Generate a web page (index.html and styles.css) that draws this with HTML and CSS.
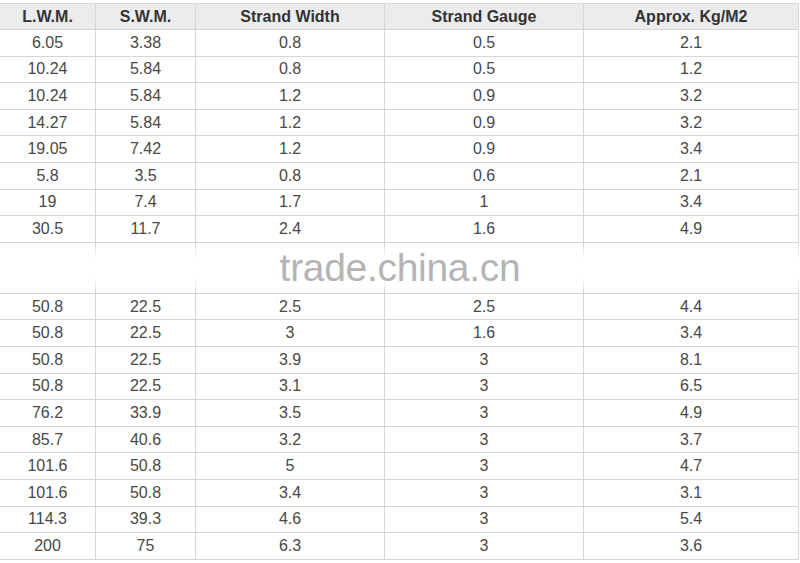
FILE: index.html
```html
<!DOCTYPE html>
<html>
<head>
<meta charset="utf-8">
<link rel="stylesheet" href="styles.css">
</head>
<body>
<div class="wrap">
<table class="spec">
  <colgroup>
    <col class="c1"><col class="c2"><col class="c3"><col class="c4"><col class="c5">
  </colgroup>
  <thead>
    <tr><th>L.W.M.</th><th>S.W.M.</th><th>Strand Width</th><th>Strand Gauge</th><th>Approx. Kg/M2</th></tr>
  </thead>
  <tbody>
    <tr><td>6.05</td><td>3.38</td><td>0.8</td><td>0.5</td><td>2.1</td></tr>
    <tr><td>10.24</td><td>5.84</td><td>0.8</td><td>0.5</td><td>1.2</td></tr>
    <tr><td>10.24</td><td>5.84</td><td>1.2</td><td>0.9</td><td>3.2</td></tr>
    <tr><td>14.27</td><td>5.84</td><td>1.2</td><td>0.9</td><td>3.2</td></tr>
    <tr><td>19.05</td><td>7.42</td><td>1.2</td><td>0.9</td><td>3.4</td></tr>
    <tr><td>5.8</td><td>3.5</td><td>0.8</td><td>0.6</td><td>2.1</td></tr>
    <tr><td>19</td><td>7.4</td><td>1.7</td><td>1</td><td>3.4</td></tr>
    <tr><td>30.5</td><td>11.7</td><td>2.4</td><td>1.6</td><td>4.9</td></tr>
    <tr class="blank"><td></td><td></td><td></td><td></td><td></td></tr>
    <tr><td>50.8</td><td>22.5</td><td>2.5</td><td>2.5</td><td>4.4</td></tr>
    <tr><td>50.8</td><td>22.5</td><td>3</td><td>1.6</td><td>3.4</td></tr>
    <tr><td>50.8</td><td>22.5</td><td>3.9</td><td>3</td><td>8.1</td></tr>
    <tr><td>50.8</td><td>22.5</td><td>3.1</td><td>3</td><td>6.5</td></tr>
    <tr><td>76.2</td><td>33.9</td><td>3.5</td><td>3</td><td>4.9</td></tr>
    <tr><td>85.7</td><td>40.6</td><td>3.2</td><td>3</td><td>3.7</td></tr>
    <tr><td>101.6</td><td>50.8</td><td>5</td><td>3</td><td>4.7</td></tr>
    <tr><td>101.6</td><td>50.8</td><td>3.4</td><td>3</td><td>3.1</td></tr>
    <tr><td>114.3</td><td>39.3</td><td>4.6</td><td>3</td><td>5.4</td></tr>
    <tr><td>200</td><td>75</td><td>6.3</td><td>3</td><td>3.6</td></tr>
  </tbody>
</table>
<div class="watermark"><span>trade.china.cn</span></div>
</div>
</body>
</html>
```
FILE: styles.css
```css
html, body {
  margin: 0;
  padding: 0;
  background: #fff;
}
.wrap {
  position: relative;
  width: 800px;
  height: 563px;
  overflow: hidden;
  padding-top: 3px;
  box-sizing: border-box;
}
.spec {
  border-collapse: collapse;
  table-layout: fixed;
  width: 799px;
  margin-left: -1px;
  font-family: "Liberation Sans", Arial, sans-serif;
  font-size: 16px;
  color: #484848;
}
.c1 { width: 96px; }
.c2 { width: 100px; }
.c3 { width: 189px; }
.c4 { width: 199px; }
.c5 { width: 215px; }
.spec th, .spec td {
  border: 1px solid #d6d6d6;
  text-align: center;
  padding: 0;
  line-height: 18px;
}
.spec th {
  background: #ececec;
  color: #333;
  font-weight: bold;
  height: 25px;
}
.spec td {
  height: 25.6px;
}
.spec tr.blank td {
  height: 50px;
}
.watermark {
  position: absolute;
  left: 0;
  top: 246px;
  width: 800px;
  height: 44px;
  display: flex;
  justify-content: center;
  align-items: center;
  background: linear-gradient(to bottom, rgba(255,255,255,0.2), #fff 30%, #fff 70%, rgba(255,255,255,0.2));
}
.watermark span {
  font-family: "Liberation Sans", Arial, sans-serif;
  font-size: 39px;
  color: #b4b4b4;
  letter-spacing: -0.3px;
}
```
